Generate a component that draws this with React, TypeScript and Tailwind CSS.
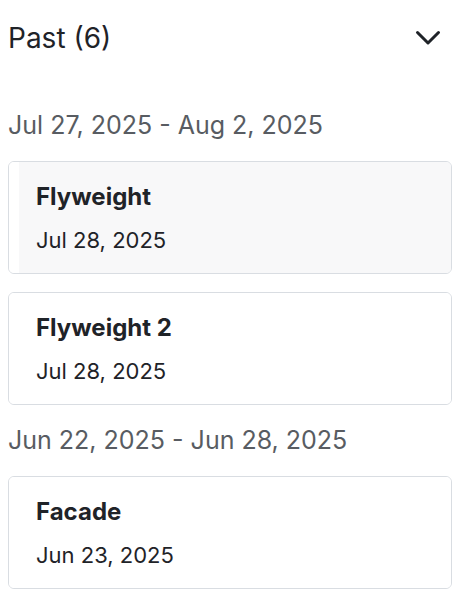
interface Meeting {
  title: string;
  date: string;
  active?: boolean;
}

interface Group {
  range: string;
  items: Meeting[];
}

const groups: Group[] = [
  {
    range: "Jul 27, 2025 - Aug 2, 2025",
    items: [
      { title: "Flyweight", date: "Jul 28, 2025", active: true },
      { title: "Flyweight 2", date: "Jul 28, 2025" },
    ],
  },
  {
    range: "Jun 22, 2025 - Jun 28, 2025",
    items: [{ title: "Facade", date: "Jun 23, 2025" }],
  },
];

function Card({ item }: { item: Meeting }) {
  return (
    <div className="flex h-[113px] overflow-hidden rounded-md border border-[#d9dde2] bg-white">
      <div className="w-[10px] shrink-0 bg-white" />
      <div
        className={`flex flex-1 flex-col gap-[20px] pl-[17px] pt-[23px] ${
          item.active ? "bg-[#f8f8f9]" : "bg-white"
        }`}
      >
        <span className="text-[24px] font-bold leading-none text-[#1f2328]">{item.title}</span>
        <span className="text-[22px] leading-none text-[#1f2328]">{item.date}</span>
      </div>
    </div>
  );
}

export default function App() {
  return (
    <div className="min-h-[600px] bg-white pl-2 pr-3 font-['Inter',sans-serif]">
      {/* header */}
      <div className="flex h-[76px] items-center justify-between">
        <span className="text-[28px] leading-none text-[#1f2328]">Past (6)</span>
        <svg width="26" height="16" viewBox="0 0 26 16" className="mr-[11px] text-[#1f2328]">
          <polyline
            points="2.5,2.5 13,13 23.5,2.5"
            fill="none"
            stroke="currentColor"
            strokeWidth="3"
            strokeLinecap="round"
            strokeLinejoin="round"
          />
        </svg>
      </div>

      <div className="pt-[14px]">
        {groups.map((g) => (
          <div key={g.range} className="flex flex-col">
            <div className="flex h-[71px] items-center text-[25px] leading-none text-[#585c62]">{g.range}</div>
            <div className="flex flex-col gap-[18px]">
              {g.items.map((it) => (
                <Card key={it.title} item={it} />
              ))}
            </div>
          </div>
        ))}
      </div>
    </div>
  );
}
